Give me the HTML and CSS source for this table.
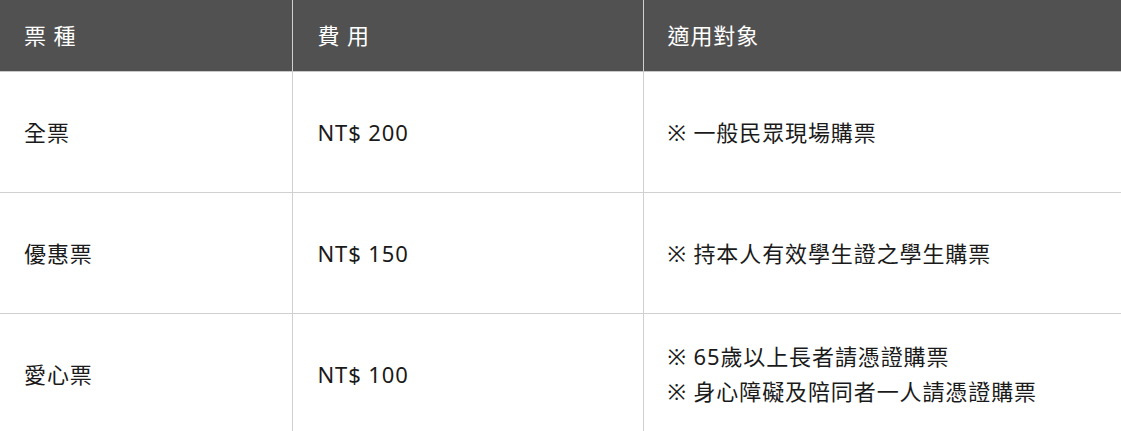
FILE: index.html
```html
<!DOCTYPE html>
<html lang="zh-Hant">
<head>
<meta charset="utf-8">
<title>票種</title>
<link rel="stylesheet" href="styles.css">
</head>
<body>
<table class="ticket-table">
  <colgroup>
    <col class="col-type">
    <col class="col-fee">
    <col class="col-target">
  </colgroup>
  <thead>
    <tr>
      <th>票 種</th>
      <th>費 用</th>
      <th>適用對象</th>
    </tr>
  </thead>
  <tbody>
    <tr>
      <td>全票</td>
      <td>NT$ 200</td>
      <td>※ 一般民眾現場購票</td>
    </tr>
    <tr>
      <td>優惠票</td>
      <td>NT$ 150</td>
      <td>※ 持本人有效學生證之學生購票</td>
    </tr>
    <tr>
      <td>愛心票</td>
      <td>NT$ 100</td>
      <td>※ 65歲以上長者請憑證購票<br>※ 身心障礙及陪同者一人請憑證購票</td>
    </tr>
  </tbody>
</table>
</body>
</html>
```
FILE: styles.css
```css
html, body {
  margin: 0;
  padding: 0;
  background: #fff;
}
body {
  font-family: "Noto Sans", "Noto Sans CJK TC", sans-serif;
  font-size: 22px;
  color: #1a1a1a;
}
.ticket-table {
  width: 1121px;
  border-collapse: collapse;
  table-layout: fixed;
}
.col-type { width: 292px; }
.col-fee { width: 351px; }
.col-target { width: 478px; }
.ticket-table th,
.ticket-table td {
  text-align: left;
  vertical-align: middle;
  padding: 0 0 0 24px;
  line-height: 35px;
  letter-spacing: 0.9px;
  border-left: 1px solid #cfcfcf;
  border-bottom: 1px solid #d0d0d0;
}
.ticket-table td:nth-child(2),
.ticket-table th:nth-child(2) {
  padding-left: 25px;
}
.ticket-table th:first-child,
.ticket-table td:first-child {
  border-left: none;
}
.ticket-table th {
  background: #515151;
  color: #fff;
  font-weight: normal;
  height: 71px;
  border-bottom: 1px solid #c8c8c8;
}
.ticket-table td {
  height: 120px;
}
```
